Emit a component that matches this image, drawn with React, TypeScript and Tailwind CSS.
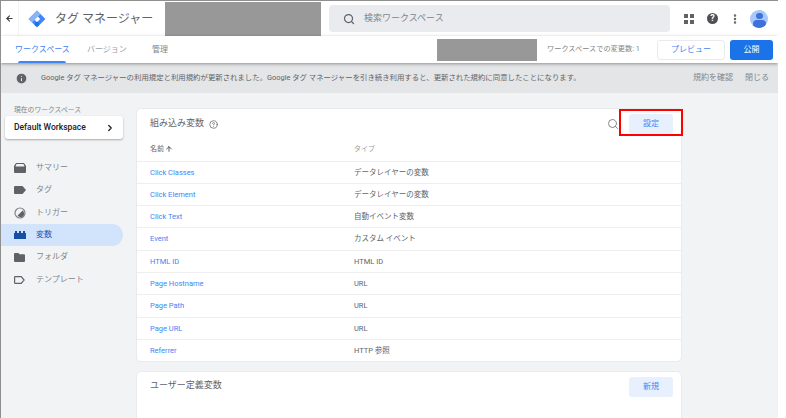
import React from 'react';
import { ArrowLeft, ArrowUp, ChevronRight, CircleHelp, EllipsisVertical, Info, Search } from 'lucide-react';

const rows = [
  { name: 'Click Classes', type: 'データレイヤーの変数' },
  { name: 'Click Element', type: 'データレイヤーの変数' },
  { name: 'Click Text', type: '自動イベント変数' },
  { name: 'Event', type: 'カスタム イベント' },
  { name: 'HTML ID', type: 'HTML ID' },
  { name: 'Page Hostname', type: 'URL' },
  { name: 'Page Path', type: 'URL' },
  { name: 'Page URL', type: 'URL' },
  { name: 'Referrer', type: 'HTTP 参照' },
];

const SummaryIcon = () => (
  <svg width="12" height="10" viewBox="0 0 12 10"><path d="M2 0h8l2 3v6a1 1 0 0 1-1 1H1a1 1 0 0 1-1-1V3zM1.5 3.5h9L9.5 1h-7z" fill="#5f6368" fillRule="evenodd" /></svg>
);
const TagIcon = () => (
  <svg width="12" height="8" viewBox="0 0 12 8"><path d="M1 0h7.5L12 4 8.5 8H1a1 1 0 0 1-1-1V1a1 1 0 0 1 1-1z" fill="#5f6368" /></svg>
);
const TriggerIcon = () => (
  <svg width="12" height="12" viewBox="0 0 12 12"><circle cx="6" cy="6" r="5" fill="none" stroke="#80868b" strokeWidth="1.2" /><path d="M8.6 3.6A3.6 3.6 0 1 1 3.6 8.6z" fill="#5f6368" /></svg>
);
const VariableIcon = () => (
  <svg width="12" height="8" viewBox="0 0 12 8"><path d="M0 2h1V0h2v2h2V0h2v2h2V0h2v2h1v6H0z" fill="#174ea6" /></svg>
);
const FolderIcon = () => (
  <svg width="11" height="9" viewBox="0 0 11 9"><path d="M1 0h3.5l1 1.2H10a1 1 0 0 1 1 1V8a1 1 0 0 1-1 1H1a1 1 0 0 1-1-1V1a1 1 0 0 1 1-1z" fill="#5f6368" /></svg>
);
const TemplateIcon = () => (
  <svg width="11" height="8" viewBox="0 0 11 8"><path d="M1.2.7h6l2.9 3.3-2.9 3.3h-6a.6.6 0 0 1-.6-.6V1.300a.6.6 0 0 1 .6-.6z" fill="none" stroke="#5f6368" strokeWidth="1.200" /></svg>
);

const nav = [
  { label: 'サマリー', icon: <SummaryIcon /> },
  { label: 'タグ', icon: <TagIcon /> },
  { label: 'トリガー', icon: <TriggerIcon /> },
  { label: '変数', icon: <VariableIcon />, active: true },
  { label: 'フォルダ', icon: <FolderIcon /> },
  { label: 'テンプレート', icon: <TemplateIcon /> },
];

const App: React.FC = () => {
  return (
    <div className="relative w-[786px] h-[418px] overflow-hidden bg-white font-['Roboto','Noto_Sans_CJK_JP',sans-serif]">
      <div className="w-[778px] h-[418px] flex flex-col bg-[#f1f3f4] border-l border-t border-[#8f8f8f] overflow-hidden">
        {/* top bar */}
        <div className="h-[35px] shrink-0 bg-white flex items-center">
          <div className="w-[18px] h-full flex items-center justify-center border-r border-[#f1f3f4]">
            <ArrowLeft size={9} strokeWidth={3} className="text-[#3c4043]" />
          </div>
          <svg width="18" height="18" viewBox="0 0 18 18" className="ml-[9px]">
            <path d="M9 0.600 L17.400 9 L9 17.400 L0.600 9 Z" fill="#4285f4" />
            <path d="M9 5.800 L12.200 9 L9 12.200 L5.800 9 Z" fill="#fff" />
            <path d="M9 0.600 L12.500 4.100 L4.100 12.500 L0.600 9 Z" fill="#8ab4f8" />
            <circle cx="9" cy="14" r="2.300" fill="#1a73e8" />
          </svg>
          <div className="ml-[9px] w-[110px] text-[12px] text-[#5f6368] whitespace-nowrap">タグ マネージャー</div>
          <div className="w-[156px] h-[34px] self-end bg-[#989898]" />
          <div className="ml-[8px] w-[341px] h-[27px] rounded-[4px] bg-[#e9ebee] flex items-center pl-[14px]">
            <Search size={12} strokeWidth={2.500} className="text-[#5f6368]" />
            <span className="ml-[9px] text-[9px] text-[#80868b]">検索ワークスペース</span>
          </div>
          <div className="ml-[14px] grid grid-cols-2 gap-[2px] w-[9px]">
            <span className="w-[4px] h-[4px] bg-[#5f6368]" />
            <span className="w-[4px] h-[4px] bg-[#5f6368]" />
            <span className="w-[4px] h-[4px] bg-[#5f6368]" />
            <span className="w-[4px] h-[4px] bg-[#5f6368]" />
          </div>
          <div className="ml-[14px] w-[11px] h-[11px] rounded-full bg-[#4d5156] flex items-center justify-center text-[9px] leading-none font-bold text-white">?</div>
          <EllipsisVertical size={12} strokeWidth={3} className="ml-[11px] text-[#5f6368]" />
          <div className="ml-[9px] w-[18px] h-[18px] rounded-full bg-[#a8c7fa] overflow-hidden flex flex-col items-center">
            <span className="mt-[3px] w-[7px] h-[7px] rounded-full bg-[#3f72d8]" />
            <span className="mt-[1px] w-[13px] h-[8px] rounded-full bg-[#3f72d8]" />
          </div>
        </div>

        {/* tab bar */}
        <div className="h-[27px] shrink-0 bg-white flex items-center shadow-[0_1px_3px_rgba(60,64,67,0.5)] z-10">
          <div className="relative h-full w-[86px] pl-[14px] flex items-center text-[8px] text-[#4285f4] whitespace-nowrap">
            ワークスペース
            <span className="absolute left-[17px] bottom-0 w-[48px] h-[2px] rounded-t bg-[#4285f4]" />
          </div>
          <div className="w-[65px] text-[8px] text-[#9aa0a6] whitespace-nowrap">バージョン</div>
          <div className="w-[285px] text-[8px] text-[#80868b]">管理</div>
          <div className="w-[100px] h-[22px] bg-[#989898]" />
          <div className="ml-[10px] w-[110px] text-[7.200px] text-[#80868b] whitespace-nowrap">ワークスペースでの変更数: 1</div>
          <div className="w-[68px] h-[20px] rounded-[3px] border border-[#e8eaed] flex items-center justify-center text-[8px] text-[#4285f4]">プレビュー</div>
          <div className="ml-[5px] w-[43px] h-[20px] rounded-[3px] bg-[#1a73e8] flex items-center justify-center text-[8px] text-white">公開</div>
        </div>

        {/* notice */}
        <div className="h-[30px] shrink-0 bg-[#e4e5e7] flex items-center pl-[14px] text-[7.400px] text-[#5f6368]">
          <Info size={13} fill="#5f6368" stroke="#e4e5e7" strokeWidth={2} />
          <span className="ml-[13px] w-[652px] whitespace-nowrap">Google タグ マネージャーの利用規定と利用規約が更新されました。Google タグ マネージャーを引き続き利用すると、更新された規約に同意したことになります。</span>
          <span className="text-[#80868b] text-[8px]">規約を確認</span>
          <span className="ml-[12px] text-[#80868b] text-[8px]">閉じる</span>
        </div>

        <div className="flex flex-1 min-h-0">
          {/* sidebar */}
          <div className="w-[135px] shrink-0">
            <div className="mt-[12px] ml-[13px] text-[6.800px] leading-[10px] text-[#80868b]">現在のワークスペース</div>
            <div className="mt-[1px] ml-[4px] w-[118px] h-[23px] rounded-[3px] bg-white shadow-[0_1px_2px_rgba(60,64,67,0.4)] flex items-center justify-between pl-[9px] pr-[8px]">
              <span className="text-[8.500px] font-medium text-[#202124]">Default Workspace</span>
              <ChevronRight size={10} strokeWidth={3} className="text-[#202124]" />
            </div>
            <div className="mt-[18px]">
              {nav.map((item) => (
                <div
                  key={item.label}
                  className={`w-[122px] h-[22.300px] flex items-center rounded-r-full text-[8px] ${item.active ? 'bg-[#d2e3fc] text-[#1a56b8]' : 'text-[#80868b]'}`}
                >
                  <div className="w-[35px] pl-[13px] flex items-center">{item.icon}</div>
                  <span>{item.label}</span>
                </div>
              ))}
            </div>
          </div>

          {/* main column */}
          <div className="w-[546px] pt-[15px] flex flex-col gap-[9px]">
            <div className="bg-white rounded-[5px] border border-[#e8eaed] shrink-0">
              <div className="h-[30px] flex items-center pl-[13px] pr-[8px]">
                <span className="text-[9px] text-[#5f6368]">組み込み変数</span>
                <CircleHelp size={9} strokeWidth={2} className="ml-[5px] text-[#5f6368]" />
                <Search size={12} strokeWidth={2} className="ml-auto text-[#80868b]" />
                <div className="ml-[10px] w-[44px] h-[20px] rounded-[3px] bg-[#e8f0fe] flex items-center justify-center text-[8px] text-[#4285f4]">設定</div>
              </div>
              <div className="h-[22.500px] flex items-center pb-[1px] pl-[13px] border-b border-[#eeeeee]">
                <div className="w-[204px] flex items-center text-[7px] text-[#5f6368]">
                  名前
                  <ArrowUp size={8} strokeWidth={2.500} className="ml-[1px] text-[#3c4043]" />
                </div>
                <div className="text-[7px] text-[#9aa0a6]">タイプ</div>
              </div>
              {rows.map((row, index) => (
                <div key={row.name} className={`${index < rows.length - 1 ? 'h-[22.300px] border-b border-[#eeeeee]' : 'h-[21.500px]'} flex items-center pl-[13px] text-[7.500px]`}>
                  <div className="w-[204px] text-[#4285f4]">{row.name}</div>
                  <div className="text-[#5f6368]">{row.type}</div>
                </div>
              ))}
            </div>

            <div className="bg-white rounded-t-[5px] border border-[#e8eaed] h-[60px] shrink-0 pl-[13px] pr-[8px] pt-[5px] flex items-start justify-between">
              <span className="mt-[2px] text-[9px] text-[#5f6368]">ユーザー定義変数</span>
              <div className="w-[44px] h-[20px] rounded-[3px] bg-[#e8f0fe] flex items-center justify-center text-[8px] text-[#4285f4]">新規</div>
            </div>
          </div>
        </div>
      </div>

      {/* red highlight drawn over the screenshot */}
      <div className="absolute left-[619px] top-[109px] w-[64px] h-[27px] border-2 border-[#ff0000]" />
    </div>
  );
};

export default App;
